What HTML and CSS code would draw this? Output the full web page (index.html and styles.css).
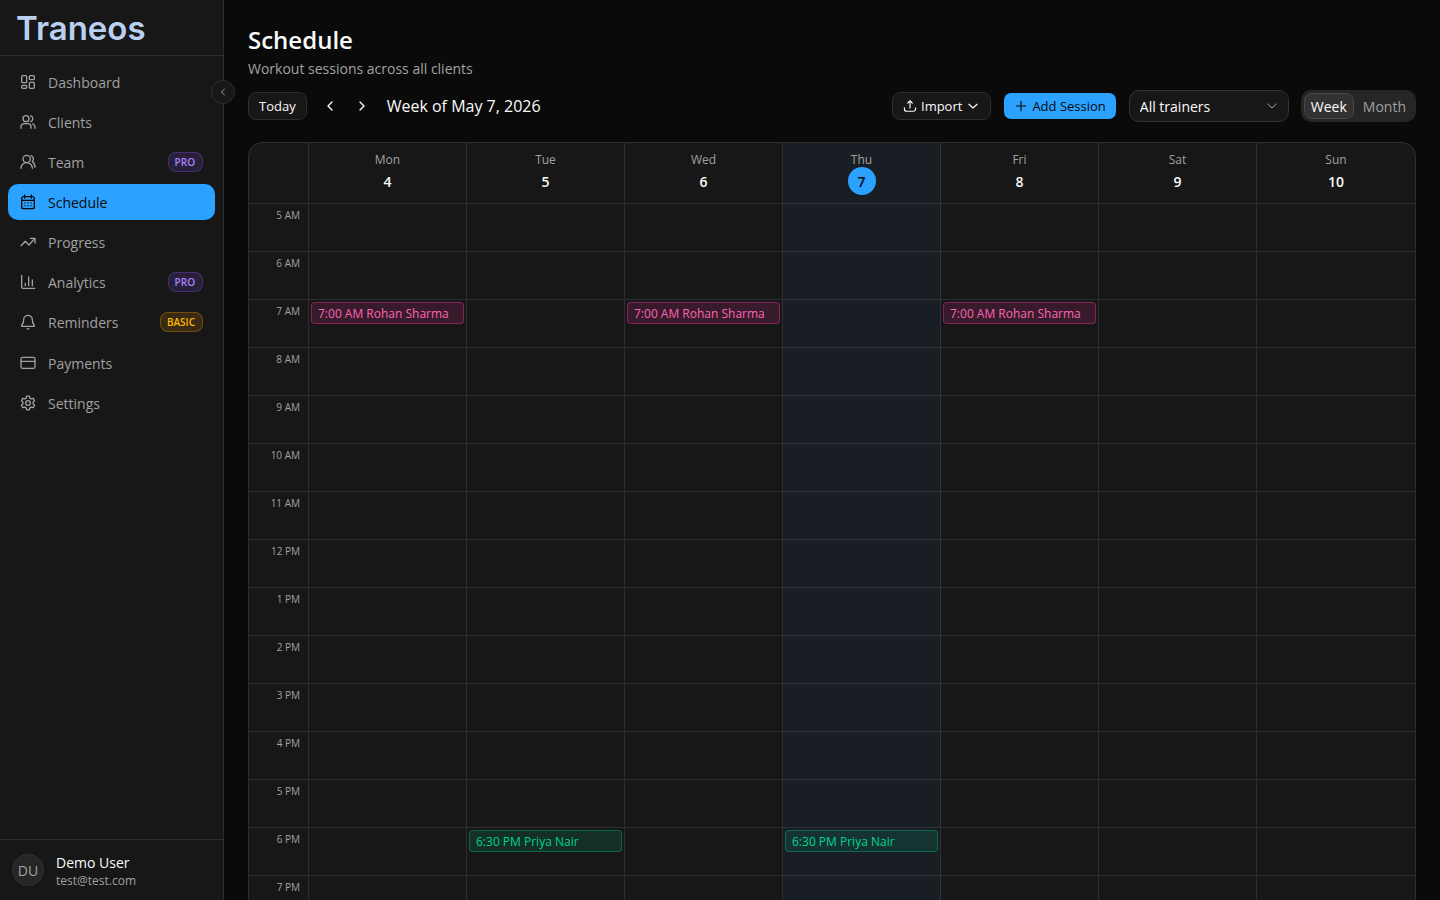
FILE: index.html
```html
<!DOCTYPE html>
<html lang="en">
<head>
<meta charset="utf-8">
<meta name="viewport" content="width=device-width, initial-scale=1">
<title>Schedule – Traneos</title>
<link rel="stylesheet" href="styles.css">
</head>
<body>
<div class="app">
  <aside class="sidebar">
    <div class="brand">Traneos</div>
    <button class="collapse" type="button" aria-label="Collapse sidebar">
      <svg class="icon icon-small" viewBox="0 0 24 24"><path d="M15 6l-6 6 6 6"/></svg>
    </button>
    <nav class="nav" aria-label="Main">
      <a class="nav-item" href="#dashboard">
        <svg class="icon" viewBox="0 0 24 24"><rect x="2.5" y="2.5" width="7.5" height="10.5" rx="1.5"/><rect x="14" y="2.5" width="7.5" height="6" rx="1.5"/><rect x="2.5" y="17" width="7.5" height="4.5" rx="1.5"/><rect x="14" y="12.5" width="7.5" height="9" rx="1.5"/></svg>
        Dashboard
      </a>
      <a class="nav-item" href="#clients">
        <svg class="icon" viewBox="0 0 24 24"><circle cx="9" cy="7" r="4.5"/><path d="M1.5 21.5v-2c0-3 2-5 5-5h5c3 0 5 2 5 5v2M16 2.7a4.5 4.5 0 0 1 0 8.6M19 14.8c2.2.8 3.5 2.6 3.5 4.7v2"/></svg>
        Clients
      </a>
      <a class="nav-item" href="#team">
        <svg class="icon" viewBox="0 0 24 24"><circle cx="10" cy="7.5" r="5.5"/><path d="M1.5 21.5a8.5 8.5 0 0 1 17 0M16.5 2.5a5.5 5.5 0 0 1 2 9c2.5 1.7 4 4.5 4 8.5"/></svg>
        Team <span class="badge badge-pro">PRO</span>
      </a>
      <a class="nav-item is-active" href="#schedule" aria-current="page">
        <svg class="icon" viewBox="0 0 24 24"><rect x="2.5" y="4" width="19" height="18" rx="3"/><path d="M7 1.5V6M17 1.5V6M2.5 9.5h19M7.5 13.5h.01M12 13.5h.01M16.5 13.5h.01M7.5 17.5h.01M12 17.5h.01M16.5 17.5h.01"/></svg>
        Schedule
      </a>
      <a class="nav-item" href="#progress">
        <svg class="icon" viewBox="0 0 24 24"><path d="M1.5 17.5l6.5-6.5 5.5 5.5L22 7M15.5 6.5h7v7"/></svg>
        Progress
      </a>
      <a class="nav-item" href="#analytics">
        <svg class="icon" viewBox="0 0 24 24"><path d="M2.5 2v17.5a2 2 0 0 0 2 2H22M8 17.5V14M13 17.5v-13M18.5 17.5V9"/></svg>
        Analytics <span class="badge badge-pro">PRO</span>
      </a>
      <a class="nav-item" href="#reminders">
        <svg class="icon" viewBox="0 0 24 24"><path d="M12 2a6.5 6.5 0 0 0-6.5 6.5c0 5-1.5 6.5-2.7 8-.7.9-.3 2 .9 2h16.6c1.2 0 1.6-1.1.9-2-1.200-1.5-2.700-3-2.700-8A6.500 6.500 0 0 0 12 2zM10.500 22.300h3"/></svg>
        Reminders <span class="badge badge-basic">BASIC</span>
      </a>
      <div class="nav-group">
        <a class="nav-item" href="#payments">
          <svg class="icon" viewBox="0 0 24 24"><rect x="1.5" y="3.5" width="21" height="16.5" rx="2.5"/><path d="M1.5 9.5h21"/></svg>
          Payments
        </a>
        <a class="nav-item" href="#settings">
          <svg class="icon" viewBox="0 0 24 24"><circle cx="12" cy="12" r="3.5"/><path d="M10 1.8h4l.8 2.9 2 1.2 3-.8 2 3.5-2.2 2.2v2.4l2.2 2.2-2 3.5-3-.8-2 1.2-.8 2.9h-4l-.8-2.9-2-1.2-3 .8-2-3.5 2.2-2.2v-2.4L2.200 8.600l2-3.500 3 .8 2-1.200z"/></svg>
          Settings
        </a>
      </div>
    </nav>
    <div class="user">
      <span class="avatar">DU</span>
      <div class="user-text">
        <div class="user-name">Demo User</div>
        <div class="user-email">test@test.com</div>
      </div>
    </div>
  </aside>

  <main class="main">
    <header>
      <h1 class="title">Schedule</h1>
      <p class="subtitle">Workout sessions across all clients</p>
    </header>
    <div class="toolbar">
      <button class="btn btn-outline" type="button">Today</button>
      <div class="stepper">
        <button class="btn-icon" type="button" aria-label="Previous week"><svg class="icon" viewBox="0 0 24 24"><path d="M15 6l-6 6 6 6"/></svg></button>
        <button class="btn-icon" type="button" aria-label="Next week"><svg class="icon" viewBox="0 0 24 24"><path d="M9 6l6 6-6 6"/></svg></button>
      </div>
      <h2 class="range">Week of May 7, 2026</h2>
      <div class="actions">
        <button class="btn btn-outline" type="button">
          <svg class="icon icon-button" viewBox="0 0 24 24"><path d="M12 15.5V3M8 7l4-4 4 4M2.500 15v2.500a3.500 3.500 0 0 0 3.500 3.500h12a3.500 3.500 0 0 0 3.500-3.500V15"/></svg>
          Import
          <svg class="icon icon-button" viewBox="0 0 24 24"><path d="M5 9l7 6.500L19 9"/></svg>
        </button>
        <button class="btn btn-primary" type="button">
          <svg class="icon icon-button" viewBox="0 0 24 24"><path d="M12 4v16M4 12h16"/></svg>
          Add Session
        </button>
        <div class="select">
          <select aria-label="Trainer"><option>All trainers</option></select>
          <svg class="icon icon-light" viewBox="0 0 24 24"><path d="M5.500 9l6.500 6 6.500-6"/></svg>
        </div>
        <div class="segmented" role="group" aria-label="View">
          <button class="segment is-on" type="button" aria-pressed="true">Week</button>
          <button class="segment" type="button" aria-pressed="false">Month</button>
        </div>
      </div>
    </div>

    <div class="calendar">
      <table class="week">
        <thead>
          <tr>
            <td class="hour"></td>
            <th scope="col">Mon<span class="date">4</span></th>
            <th scope="col">Tue<span class="date">5</span></th>
            <th scope="col">Wed<span class="date">6</span></th>
            <th scope="col" class="today">Thu<span class="date">7</span></th>
            <th scope="col">Fri<span class="date">8</span></th>
            <th scope="col">Sat<span class="date">9</span></th>
            <th scope="col">Sun<span class="date">10</span></th>
          </tr>
        </thead>
        <tbody>
          <tr><th scope="row" class="hour">5 AM</th><td></td><td></td><td></td><td class="today"></td><td></td><td></td><td></td></tr>
          <tr><th scope="row" class="hour">6 AM</th><td></td><td></td><td></td><td class="today"></td><td></td><td></td><td></td></tr>
          <tr><th scope="row" class="hour">7 AM</th>
            <td><button class="event event-pink" type="button"><span class="time">7:00 AM</span> Rohan Sharma</button></td><td></td>
            <td><button class="event event-pink" type="button"><span class="time">7:00 AM</span> Rohan Sharma</button></td><td class="today"></td>
            <td><button class="event event-pink" type="button"><span class="time">7:00 AM</span> Rohan Sharma</button></td><td></td><td></td></tr>
          <tr><th scope="row" class="hour">8 AM</th><td></td><td></td><td></td><td class="today"></td><td></td><td></td><td></td></tr>
          <tr><th scope="row" class="hour">9 AM</th><td></td><td></td><td></td><td class="today"></td><td></td><td></td><td></td></tr>
          <tr><th scope="row" class="hour">10 AM</th><td></td><td></td><td></td><td class="today"></td><td></td><td></td><td></td></tr>
          <tr><th scope="row" class="hour">11 AM</th><td></td><td></td><td></td><td class="today"></td><td></td><td></td><td></td></tr>
          <tr><th scope="row" class="hour">12 PM</th><td></td><td></td><td></td><td class="today"></td><td></td><td></td><td></td></tr>
          <tr><th scope="row" class="hour">1 PM</th><td></td><td></td><td></td><td class="today"></td><td></td><td></td><td></td></tr>
          <tr><th scope="row" class="hour">2 PM</th><td></td><td></td><td></td><td class="today"></td><td></td><td></td><td></td></tr>
          <tr><th scope="row" class="hour">3 PM</th><td></td><td></td><td></td><td class="today"></td><td></td><td></td><td></td></tr>
          <tr><th scope="row" class="hour">4 PM</th><td></td><td></td><td></td><td class="today"></td><td></td><td></td><td></td></tr>
          <tr><th scope="row" class="hour">5 PM</th><td></td><td></td><td></td><td class="today"></td><td></td><td></td><td></td></tr>
          <tr><th scope="row" class="hour">6 PM</th><td></td>
            <td><button class="event event-green" type="button"><span class="time">6:30 PM</span> Priya Nair</button></td><td></td>
            <td class="today"><button class="event event-green" type="button"><span class="time">6:30 PM</span> Priya Nair</button></td><td></td><td></td><td></td></tr>
          <tr><th scope="row" class="hour">7 PM</th><td></td><td></td><td></td><td class="today"></td><td></td><td></td><td></td></tr>
        </tbody>
      </table>
    </div>
  </main>
</div>
</body>
</html>
```

FILE: styles.css
```css
:root {
  --bg: #0a0a0a;
  --surface: #171717;
  --line: rgba(255, 255, 255, 0.1);
  --text: #fafafa;
  --muted: #a1a1a1;
  --primary: #2ba2ff;
}

* { box-sizing: border-box; }

body {
  margin: 0;
  background: var(--bg);
  color: var(--text);
  font: 14px/20px "Open Sans", "Noto Sans", sans-serif;
}

button, select { font: inherit; color: inherit; cursor: pointer; }

.app { display: flex; height: 100vh; }

.icon {
  flex: none;
  width: 16px;
  height: 16px;
  fill: none;
  stroke: currentColor;
  stroke-width: 2;
  stroke-linecap: round;
  stroke-linejoin: round;
}
.icon-button { width: 14px; height: 14px; }
.icon-small { width: 12px; height: 12px; }
.icon-light { stroke-width: 1.5; }

/* Sidebar */
.sidebar {
  position: relative;
  z-index: 1;
  display: flex;
  flex: none;
  flex-direction: column;
  width: 224px;
  background: var(--surface);
  border-right: 1px solid var(--line);
}
.brand {
  height: 56px;
  padding: 0 16px;
  border-bottom: 1px solid var(--line);
  color: #b9d0f0;
  font: 600 33px/56px Inter, sans-serif;
}
.collapse {
  position: absolute;
  top: 80px;
  right: -12px;
  display: grid;
  place-items: center;
  width: 24px;
  height: 24px;
  padding: 0;
  border: 1px solid #2e2e2e;
  border-radius: 50%;
  background: var(--surface);
  color: var(--muted);
}
.nav {
  display: flex;
  flex: 1;
  flex-direction: column;
  gap: 4px;
  padding: 8px;
  line-height: 21px;
}
.nav-group { display: flex; flex-direction: column; gap: 4px; margin-top: 1px; }
.nav-item {
  display: flex;
  align-items: center;
  gap: 12px;
  height: 36px;
  padding: 0 12px;
  border-radius: 10px;
  color: var(--muted);
  text-decoration: none;
}
.nav-item.is-active { background: var(--primary); color: #0a0a0a; }
.badge {
  margin-left: auto;
  padding: 0 7px 0 6px;
  border: 1px solid;
  border-radius: 8px;
  font-size: 10px;
  font-weight: 600;
  line-height: 18px;
}
.badge-pro { color: #a684ff; background: rgba(142, 81, 255, 0.15); border-color: rgba(142, 81, 255, 0.3); }
.badge-basic { color: #ffb900; background: rgba(254, 154, 0, 0.15); border-color: rgba(254, 154, 0, 0.3); }
.user {
  display: flex;
  align-items: center;
  gap: 12px;
  padding: 11px 12px;
  border-top: 1px solid var(--line);
}
.avatar {
  display: grid;
  place-items: center;
  width: 32px;
  height: 32px;
  border: 1px solid #333;
  border-radius: 50%;
  background: #262626;
  color: var(--muted);
  line-height: 21px;
}
.user-text { padding-top: 2px; }
.user-name { font-weight: 500; }
.user-email { color: var(--muted); font-size: 12px; line-height: 16px; }

/* Main */
.main {
  flex: 1;
  min-width: 0;
  padding: 24px;
  overflow-y: auto;
  scrollbar-width: none;
}
.title { margin: 0; font-size: 24px; font-weight: 600; line-height: 32px; }
.subtitle { margin: 3px 0 0; color: var(--muted); }
.toolbar { display: flex; align-items: center; margin: 11px 0 20px; }
.btn {
  display: flex;
  align-items: center;
  gap: 4px;
  height: 28px;
  padding: 0 10px;
  border: 1px solid transparent;
  border-radius: 8px;
  background-clip: padding-box;
  font-size: 13px;
  font-weight: 500;
}
.btn-outline { background-color: var(--surface); border-color: #2e2e2e; }
.btn-primary { background-color: var(--primary); color: #0a0a0a; }
.stepper { display: flex; gap: 4px; margin: 0 11px 0 9px; }
.btn-icon {
  display: grid;
  place-items: center;
  width: 28px;
  height: 28px;
  padding: 0;
  border: 0;
  background: none;
}
.range { margin: 0; font-size: 16px; font-weight: 500; line-height: 24px; }
.actions { display: flex; align-items: center; gap: 12px; margin-left: auto; }
.select { position: relative; width: 160px; color: var(--text); }
.select select {
  display: block;
  width: 100%;
  height: 32px;
  padding: 2px 32px 0 10px;
  border: 1px solid #333;
  border-radius: 10px;
  background: var(--surface);
  appearance: none;
}
.select .icon {
  position: absolute;
  top: 8px;
  right: 9px;
  color: var(--muted);
  pointer-events: none;
}
.segmented { display: flex; gap: 2px; padding: 3px; border-radius: 10px; background: #262626; }
.segment {
  height: 26px;
  padding: 2px 6px 0;
  border: 1px solid transparent;
  border-radius: 8px;
  background: none;
  color: var(--muted);
  font-weight: 500;
}
.segment.is-on { border-color: #484848; background: #323232; color: var(--text); }

/* Calendar */
.calendar {
  overflow: hidden;
  border: 1px solid #2e2e2e;
  border-radius: 14px;
  background: var(--surface);
}
.week { width: 100%; border-spacing: 0; table-layout: fixed; }
.week th, .week td {
  height: 48px;
  padding: 2px;
  border-right: 1px solid var(--line);
  border-bottom: 1px solid var(--line);
  vertical-align: top;
  font-weight: 400;
}
.week tr > :last-child { border-right: 0; }
.week thead th { padding: 9px 0 8px; color: var(--muted); font-size: 12px; line-height: 15px; }
.week .hour {
  width: 60px;
  padding: 4px 8px 0 0;
  color: var(--muted);
  font-size: 10px;
  line-height: 15px;
  text-align: right;
}
.date {
  display: block;
  width: 28px;
  margin: 0 auto;
  padding-top: 1px;
  border-radius: 50%;
  color: var(--text);
  font-size: 14px;
  font-weight: 600;
  line-height: 27px;
}
.week .today { background: rgba(60, 130, 255, 0.06); }
.today .date { background: var(--primary); color: #0a0a0a; }
.event {
  display: block;
  width: 100%;
  padding: 3px 6px 1px;
  overflow: hidden;
  border: 1px solid;
  border-radius: 4px;
  font-size: 12px;
  line-height: 16px;
  text-align: left;
  text-overflow: ellipsis;
  white-space: nowrap;
}
.event-pink { color: #fb64b6; background: rgba(246, 51, 154, 0.15); border-color: rgba(246, 51, 154, 0.4); }
.event-green { color: #00d492; background: rgba(0, 188, 125, 0.15); border-color: rgba(0, 188, 125, 0.4); }
```
